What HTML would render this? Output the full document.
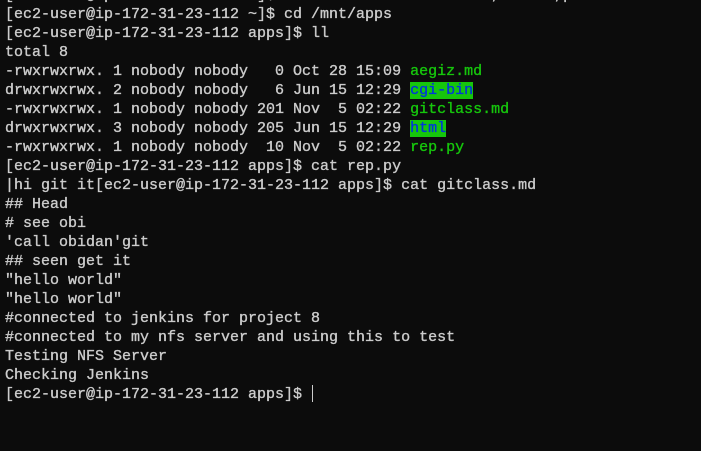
<!DOCTYPE html>
<html><head><meta charset="utf-8"><style>
html,body{margin:0;padding:0;background:#0c0c0c;width:701px;height:451px;overflow:hidden}
pre{margin:0;position:absolute;left:5px;top:-14px;font-family:"Liberation Mono",monospace;font-size:15px;line-height:19px;color:#cccccc;white-space:pre;-webkit-text-stroke:0.35px currentColor}
.g{color:#16c60c}
.h{background:#16c60c;color:#0037da}
.c{display:inline-block;width:1px;height:17px;background:#cccccc;vertical-align:-4px;margin-left:1px}
</style></head><body><pre>[ec2-user@ip-172-31-23-112 ~]$ sudo mount -t nfs -o rw,nosuid,p
[ec2-user@ip-172-31-23-112 ~]$ cd /mnt/apps
[ec2-user@ip-172-31-23-112 apps]$ ll
total 8
-rwxrwxrwx. 1 nobody nobody   0 Oct 28 15:09 <span class="g">aegiz.md</span>
drwxrwxrwx. 2 nobody nobody   6 Jun 15 12:29 <span class="h">cgi-bin</span>
-rwxrwxrwx. 1 nobody nobody 201 Nov  5 02:22 <span class="g">gitclass.md</span>
drwxrwxrwx. 3 nobody nobody 205 Jun 15 12:29 <span class="h">html</span>
-rwxrwxrwx. 1 nobody nobody  10 Nov  5 02:22 <span class="g">rep.py</span>
[ec2-user@ip-172-31-23-112 apps]$ cat rep.py
|hi git it[ec2-user@ip-172-31-23-112 apps]$ cat gitclass.md
## Head
# see obi
'call obidan'git
## seen get it
"hello world"
"hello world"
#connected to jenkins for project 8
#connected to my nfs server and using this to test
Testing NFS Server
Checking Jenkins
[ec2-user@ip-172-31-23-112 apps]$ <span class="c"></span></pre></body></html>
